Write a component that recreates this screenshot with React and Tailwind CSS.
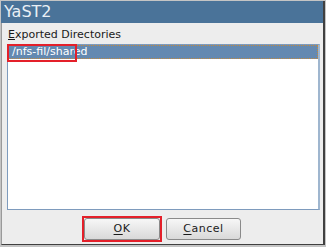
import React from 'react';

const font = { fontFamily: '"DejaVu Sans", "Liberation Sans", sans-serif' };

const Button = ({ mnemonic, rest, width }) => (
  <button
    className={`${width} h-[22px] rounded-[3px] border border-[#8a8a8a] bg-gradient-to-b from-[#f7f7f7] to-[#d9d9d9] text-[11px] text-[#1a1a1a] tracking-[0.5px] flex items-center justify-center`}
  >
    <span className="underline underline-offset-2">{mnemonic}</span>
    {rest}
  </button>
);

export default function App() {
  return (
    <div className="w-[326px] h-[247px] bg-[#c4c4c4] pt-px pl-px pr-px pb-[2px]" style={font}>
      <div className="h-full flex flex-col bg-[#ededed] border-l border-[#9a9a9a] border-r-2 border-r-[#404040] border-b border-b-[#404040]">
        {/* title bar */}
        <div className="h-[22px] shrink-0 bg-[#4a7399] text-[#e9eff5] text-[16px] leading-[22px] pl-[3px] -ml-px">
          YaST2
        </div>

        <div className="flex-1 flex flex-col pl-[5px] pr-[3px]">
          <div className="text-[11px] leading-[13px] text-[#1a1a1a] mt-[5px] ml-px">
            <span className="underline underline-offset-1">E</span>xported Directories
          </div>

          {/* list */}
          <div className="mt-[3px] h-[166px] shrink-0 bg-white border border-[#7e9bbd] border-r-2 border-r-[#9fb6cf] relative">
            <div className="h-[14px] bg-[#6489b1] border border-dotted border-[#c58a3e] text-white text-[11px] leading-[12px] pl-[3px]">
              /nfs-fil/shared
            </div>
            <div className="absolute left-[-1px] top-[-1px] w-[70px] h-[18px] border-2 border-[#e4202a]" />
          </div>

          <div className="flex items-center gap-[4px] mt-[6px] ml-[75px]">
            <div className="border-2 border-[#e4202a]">
              <Button mnemonic="O" rest="K" width="w-[76px]" />
            </div>
            <Button mnemonic="C" rest="ancel" width="w-[75px]" />
          </div>
        </div>
      </div>
    </div>
  );
}
